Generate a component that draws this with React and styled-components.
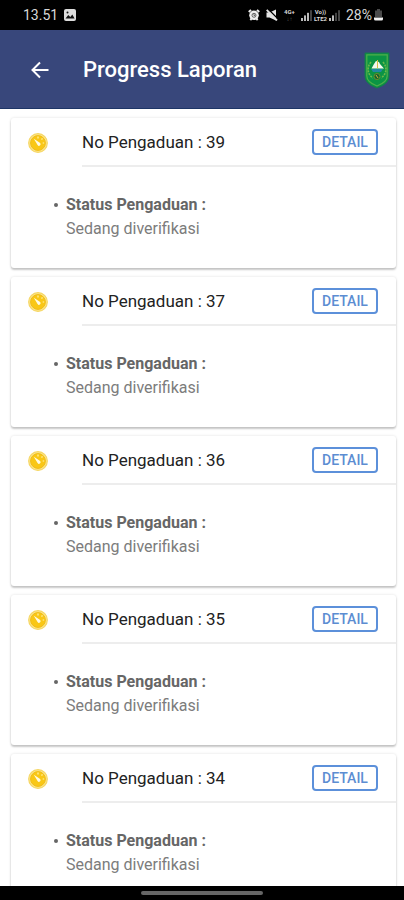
import React from "react";
import styled, { createGlobalStyle } from "styled-components";

const GlobalStyle = createGlobalStyle`
  *, *::before, *::after { box-sizing: border-box; }
  body { margin: 0; background: #fff; font-family: Roboto, sans-serif; }
`;

const Screen = styled.div`
  display: flex;
  flex-direction: column;
  height: 100vh;
  overflow: hidden;
`;

const StatusBar = styled.div`
  flex: none;
  display: flex;
  align-items: center;
  justify-content: space-between;
  height: 30px;
  padding: 0 21px 0 23px;
  background: #000;
  color: #d8d8d8;
  font-size: 14px;
  line-height: 16px;
`;

const StatusGroup = styled.div`
  display: flex;
  align-items: center;
  gap: ${(p) => p.$gap}px;
`;

const NetworkLabel = styled.span`
  display: flex;
  flex-direction: column;
  align-items: center;
  font-size: 6px;
  font-weight: 700;
  line-height: 7px;
`;

const Dim = styled.span`
  color: #555;
`;

const Header = styled.header`
  flex: none;
  display: flex;
  align-items: center;
  height: 79px;
  padding: 2px 14px 0 28px;
  background: #38477b;
  border-bottom: 1px solid #1d3566;
  color: #fff;
`;

const BackButton = styled.button`
  display: flex;
  padding: 0;
  border: 0;
  background: none;
  color: inherit;
  cursor: pointer;
`;

const Title = styled.h1`
  flex: 1;
  margin: 0 0 0 31px;
  font-size: 22px;
  font-weight: 500;
  line-height: 28px;
`;

const List = styled.main`
  flex: 1;
  min-height: 0;
  overflow: hidden;
  display: flex;
  flex-direction: column;
  gap: 9px;
  padding: 9px 8px 0 11px;
`;

const Card = styled.article`
  flex: none;
  display: flex;
  flex-direction: column;
  min-height: 150px;
  border-radius: 3px;
  background: #fff;
  box-shadow: 0 2px 2px rgba(0, 0, 0, 0.2), 0 0 3px rgba(0, 0, 0, 0.12);
`;

const CardHead = styled.div`
  display: flex;
  padding-left: 17px;
`;

const CardIcon = styled.div`
  display: flex;
  align-items: center;
  width: 54px;
`;

const CardBar = styled.div`
  flex: 1;
  display: flex;
  align-items: center;
  justify-content: space-between;
  height: 49px;
  padding-right: 18px;
  border-bottom: 2px solid #ededed;
`;

const CardTitle = styled.h2`
  margin: 0;
  color: #222;
  font-size: 17px;
  font-weight: 400;
  line-height: 24px;
`;

const DetailButton = styled.button`
  width: 66px;
  height: 26px;
  padding: 0;
  border: 2px solid #5c90da;
  border-radius: 4px;
  background: #fff;
  color: #5c8dd2;
  font: 500 14px/20px Roboto, sans-serif;
  cursor: pointer;
`;

const StatusList = styled.ul`
  margin: 0;
  padding: 26px 16px 0 43px;
  list-style: none;
`;

const StatusItem = styled.li`
  display: grid;
  grid-template-columns: 12px 1fr;
  align-items: center;
  color: #7c7c7c;
  font-size: 16px;
  line-height: 24px;

  &::before {
    content: "";
    width: 4px;
    height: 4px;
    border-radius: 50%;
    background: #666;
  }
`;

const StatusLabel = styled.strong`
  color: #666;
  font-weight: 700;
`;

const StatusValue = styled.span`
  grid-column: 2;
`;

const NavBar = styled.div`
  flex: none;
  display: flex;
  justify-content: center;
  align-items: center;
  height: 14px;
  background: #000;
`;

const HomeHandle = styled.div`
  width: 30%;
  height: 4px;
  border-radius: 2px;
  background: #666;
`;

const PictureIcon = () => (
  <svg width="12" height="12" viewBox="0 0 12 12" aria-hidden="true">
    <rect width="12" height="12" rx="2" fill="#ddd" />
    <path d="M1.5 9.5 4.3 6l2 2 2-2.5 2.3 4z" fill="#111" />
    <circle cx="3.5" cy="3.5" r="1" fill="#111" />
  </svg>
);

const AlarmIcon = () => (
  <svg width="12" height="12" viewBox="0 0 12 12" aria-hidden="true">
    <path d="M.8 3 3 .9M11.2 3 9 .9M2.3 11l1.2-1.2M9.7 11 8.5 9.8" stroke="#eee" strokeWidth="2" />
    <circle cx="6" cy="6.3" r="4.8" fill="#eee" />
    <circle cx="6" cy="6.3" r="2" fill="none" stroke="#444" strokeWidth=".8" />
    <path d="M6 4.8v1.8h1.3" stroke="#444" fill="none" strokeWidth=".8" />
  </svg>
);

const MuteIcon = () => (
  <svg width="12" height="12" viewBox="0 0 12 12" aria-hidden="true">
    <path d="M.5 3.500h3L10 .5v11L3.500 8.500h-3z" fill="#e4e4e4" />
    <path d="M2.500.5 12 10" stroke="#000" strokeWidth="1.400" />
    <path d="m.7.8 10.300 10.600" stroke="#e4e4e4" strokeWidth="1.800" />
  </svg>
);

const SignalIcon = ({ level }) => (
  <svg width="11" height="11" viewBox="0 0 11 11" aria-hidden="true">
    {[0, 1, 2, 3].map((i) => (
      <rect key={i} x={i * 3} y={8 - i * 2.6} width="2" height={3 + i * 2.6} fill={i < level ? "#bbb" : "#444"} />
    ))}
  </svg>
);

const BatteryIcon = () => (
  <svg width="9" height="12" viewBox="0 0 9 12" aria-hidden="true">
    <path d="M3 0h3v1.5h2V8H1V1.5h2z" fill="#4a4a4a" />
    <path d="M0 8.5h9V10a1.5 1.5 0 0 1-1.5 1.5h-6A1.5 1.5 0 0 1 0 10z" fill="#f2f2f2" />
  </svg>
);

const BackIcon = () => (
  <svg width="24" height="24" viewBox="0 0 24 24" fill="none" stroke="currentColor" strokeWidth="2" aria-hidden="true">
    <path d="M20.500 12H4.500M12 4.500 4.500 12l7.500 7.500" />
  </svg>
);

const RegionCrest = () => (
  <svg width="26" height="37" viewBox="0 0 26 37" role="img" aria-label="Riau">
    <path d="M1 1h24v23c0 6-5 9.5-12 12C6 33.500 1 30 1 24z" fill="#0b9444" stroke="#167a4d" />
    <path d="M2.800 2.800h20.400V24c0 4.600-4 7.600-10.200 10C6.800 31.600 2.800 28.600 2.800 24z" fill="none" stroke="#4fae49" strokeWidth="1.200" />
    <path d="M7 10c-5 6-3 13 2 16M19 10c5 6 3 13-2 16" fill="none" stroke="#6fb84a" strokeWidth="1.600" strokeDasharray="2 1" />
    <path d="M7.500 16.500 10 12l2-3 3 1 1 2 4 4.500z" fill="#f4f8ee" />
    <path d="M13.500 8v8" stroke="#d8bd45" />
    <path d="M7 17h12l-2 3H9z" fill="#2388a0" />
    <circle cx="13" cy="24.500" r="3" fill="#14642f" stroke="#6d8c2c" />
    <path d="m12 23 2 3" stroke="#d1ae38" />
  </svg>
);

const TimerIcon = () => (
  <svg width="20" height="20" viewBox="0 0 20 20" aria-hidden="true">
    <circle cx="10" cy="10" r="9.300" fill="#fbe58e" stroke="#f6d662" strokeWidth="1.200" />
    <circle cx="10" cy="10" r="7.400" fill="#f9c716" stroke="#f2bd16" />
    <path d="M5.800 5.800 11.800 9.800a1.600 1.600 0 1 1-2.200 2.200z" fill="#fffbe3" />
    <path d="M10 3.500v2M16.200 10h-1.500M14.500 5.500l-1 1" stroke="#fff3b0" strokeWidth="1.200" />
  </svg>
);

const reports = [39, 37, 36, 35, 34];

const ReportCard = ({ number }) => (
  <Card>
    <CardHead>
      <CardIcon>
        <TimerIcon />
      </CardIcon>
      <CardBar>
        <CardTitle>No Pengaduan : {number}</CardTitle>
        <DetailButton type="button">DETAIL</DetailButton>
      </CardBar>
    </CardHead>
    <StatusList>
      <StatusItem>
        <StatusLabel>Status Pengaduan :</StatusLabel>
        <StatusValue>Sedang diverifikasi</StatusValue>
      </StatusItem>
    </StatusList>
  </Card>
);

export default function App() {
  return (
    <Screen>
      <GlobalStyle />
      <StatusBar>
        <StatusGroup $gap={6}>
          <span>13.51</span>
          <PictureIcon />
        </StatusGroup>
        <StatusGroup $gap={6}>
          <AlarmIcon />
          <MuteIcon />
          <NetworkLabel>
            <span>4G+</span>
            <Dim>↓↑</Dim>
          </NetworkLabel>
          <StatusGroup $gap={2}>
            <SignalIcon level={3} />
            <NetworkLabel>
              <span>Vo))</span>
              <span>LTE2</span>
            </NetworkLabel>
            <SignalIcon level={2} />
          </StatusGroup>
          <StatusGroup $gap={2}>
            <span>28%</span>
            <BatteryIcon />
          </StatusGroup>
        </StatusGroup>
      </StatusBar>
      <Header>
        <BackButton type="button" aria-label="Kembali">
          <BackIcon />
        </BackButton>
        <Title>Progress Laporan</Title>
        <RegionCrest />
      </Header>
      <List>
        {reports.map((number) => (
          <ReportCard key={number} number={number} />
        ))}
      </List>
      <NavBar>
        <HomeHandle />
      </NavBar>
    </Screen>
  );
}
